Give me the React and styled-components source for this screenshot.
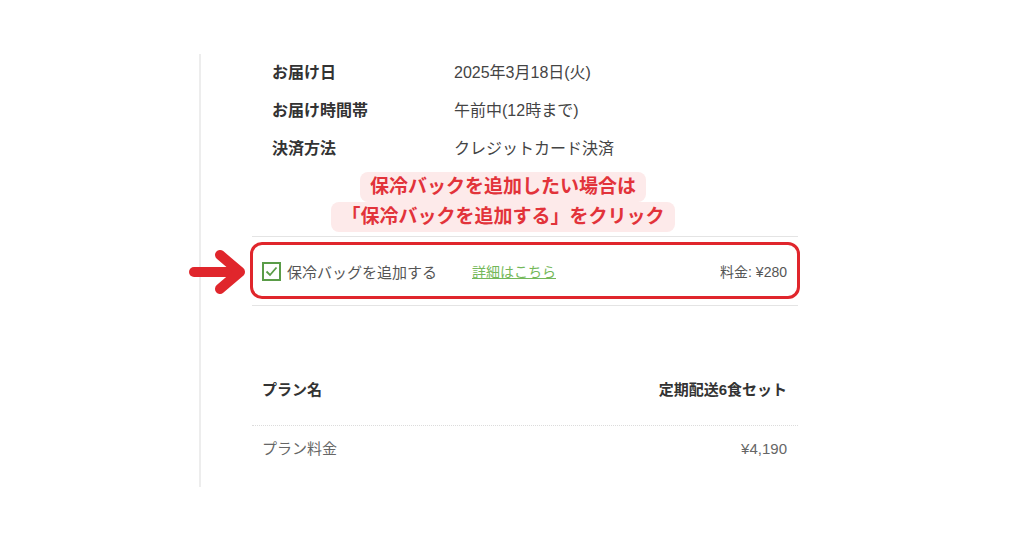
import React from 'react'
import styled, { createGlobalStyle } from 'styled-components'

const GlobalStyle = createGlobalStyle`
  body {
    margin: 0;
    background: #fff;
    font-family: "Liberation Sans", "Noto Sans CJK JP", sans-serif;
  }
`

const Page = styled.div`
  padding: 54px 0 0 199px;
`

const Panel = styled.div`
  border-left: 2px solid #ededed;
  height: 433px;
  width: 546px;
  padding-left: 51px;
`

const InfoList = styled.div`
  display: flex;
  flex-direction: column;
  gap: 4px;
  padding-left: 20px;
`

const InfoRow = styled.div`
  display: grid;
  grid-template-columns: 182px 1fr;
  height: 34px;
  align-items: center;
  font-size: 16px;
`

const Label = styled.span`
  font-weight: 700;
  color: #333;
`

const Value = styled.span`
  color: #444;
`

const Callout = styled.div`
  margin-top: 8px;
  padding-right: 44px;
  display: flex;
  flex-direction: column;
  align-items: center;
  color: #e2333a;
  font-size: 19px;
  font-weight: 700;
`

const CalloutLine = styled.span`
  background: #fdeaea;
  height: 30px;
  line-height: 30px;
  padding: 0 10px;
  border-radius: 8px;
  white-space: nowrap;
`

const OptionRow = styled.div`
  position: relative;
  margin-top: 4px;
  height: 68px;
  border-top: 1px solid #e4e4e4;
  border-bottom: 1px solid #e4e4e4;
  display: flex;
  align-items: center;
  padding: 0 11px 0 10px;
  font-size: 15px;
  color: #555;

  &::after {
    content: '';
    position: absolute;
    top: 5px;
    bottom: 6px;
    left: -2px;
    right: -2px;
    border: 3px solid #e0262c;
    border-radius: 12px;
  }
`

const Arrow = styled.svg`
  position: absolute;
  left: -63px;
  top: 50%;
  transform: translateY(-48%);
`

const Check = styled.span`
  width: 19px;
  height: 19px;
  box-sizing: border-box;
  border: 2px solid #5a9c48;
  display: flex;
  align-items: center;
  justify-content: center;
  margin-right: 6px;
`

const OptionName = styled.span`
  width: 185px;
`

const DetailLink = styled.a`
  color: #74b85a;
  font-size: 14px;
  text-decoration: underline;
  cursor: pointer;
`

const Price = styled.span`
  margin-left: auto;
  font-size: 14px;
`

const PlanRow = styled.div`
  display: flex;
  justify-content: space-between;
  line-height: 36px;
  padding: ${p => (p.$head ? '66px 11px 17px 10px' : '5px 11px 0 10px')};
  border-bottom: ${p => (p.$head ? '1px dotted #dcdcdc' : 'none')};
  font-size: 15px;
  font-weight: ${p => (p.$head ? 700 : 400)};
  color: ${p => (p.$head ? '#333' : '#666')};
`

const info = [
  ['お届け日', '2025年3月18日(火)'],
  ['お届け時間帯', '午前中(12時まで)'],
  ['決済方法', 'クレジットカード決済'],
]

const App = () => {
  return (
    <Page>
      <GlobalStyle />
      <Panel>
        <InfoList>
          {info.map(([k, v]) => (
            <InfoRow key={k}>
              <Label>{k}</Label>
              <Value>{v}</Value>
            </InfoRow>
          ))}
        </InfoList>

        <Callout>
          <CalloutLine>保冷バックを追加したい場合は</CalloutLine>
          <CalloutLine>「保冷バックを追加する」をクリック</CalloutLine>
        </Callout>

        <OptionRow>
          <Arrow width="58" height="46" viewBox="0 0 58 46">
            <g fill="none" stroke="#e0262c" strokeWidth="10" strokeLinecap="round" strokeLinejoin="round">
              <path d="M5 23 H44" />
              <path d="M31 6 L51 23 L31 40" />
            </g>
          </Arrow>
          <Check>
            <svg width="13" height="11" viewBox="0 0 13 11">
              <path d="M1.5 5.5 L5 9 L11.5 1.5" fill="none" stroke="#5a9c48" strokeWidth="1.8" />
            </svg>
          </Check>
          <OptionName>保冷バッグを追加する</OptionName>
          <DetailLink>詳細はこちら</DetailLink>
          <Price>料金: ¥280</Price>
        </OptionRow>

        <PlanRow $head>
          <span>プラン名</span>
          <span>定期配送6食セット</span>
        </PlanRow>
        <PlanRow>
          <span>プラン料金</span>
          <span>¥4,190</span>
        </PlanRow>
      </Panel>
    </Page>
  )
}

export default App
